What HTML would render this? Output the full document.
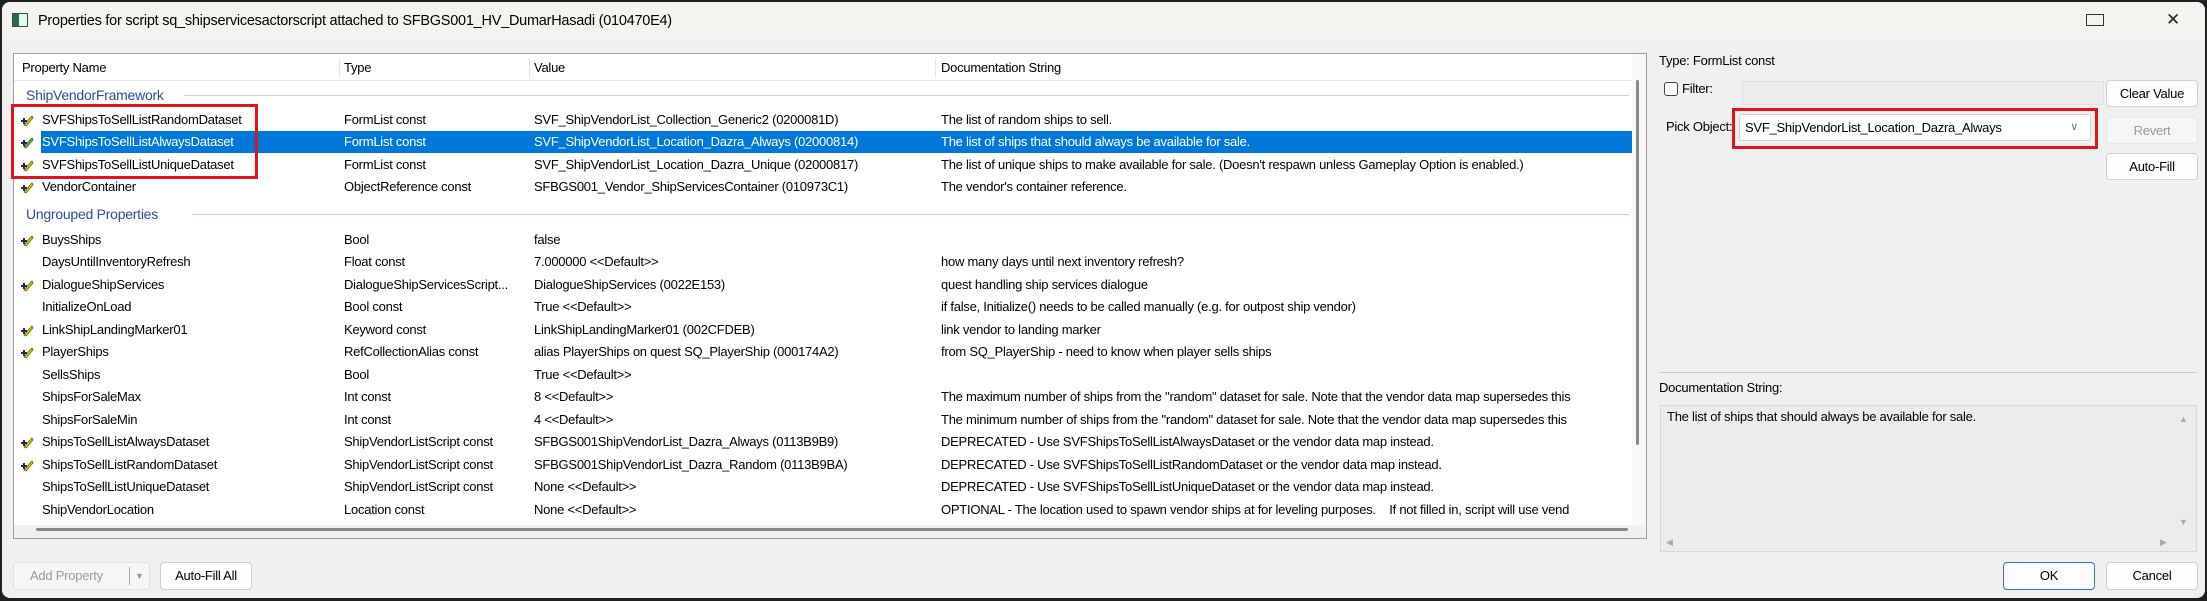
<!DOCTYPE html>
<html><head><meta charset="utf-8"><style>
*{margin:0;padding:0;box-sizing:border-box}
body{width:2207px;height:601px;background:#202020;font-family:"Liberation Sans",sans-serif;font-size:13px;letter-spacing:-0.25px;color:#000;overflow:hidden;position:relative}
.win{position:absolute;left:2px;top:2px;width:2203px;height:596px;background:#f0f0f0;border-radius:8px;overflow:hidden}
.title{position:absolute;left:0;top:0;width:100%;height:38px;background:#f5f3ee}
.a{position:absolute;white-space:nowrap}
.list{position:absolute;left:11px;top:51px;width:1634px;height:486px;background:#fff;border:1px solid #a0a0a0;overflow:hidden}
.row{position:absolute;left:0;width:1620px;height:22px;line-height:22px}
.row span{position:absolute;top:0;white-space:nowrap}
.sel{background:#0078d7;color:#fff}
.grp{color:#2b4aa8;font-size:14px}
.gl{position:absolute;height:1px;background:#c8d0e8}
.btn{position:absolute;background:#fdfdfd;border:1px solid #d0d0d0;border-radius:4px;text-align:center;font-size:13px}
.ico{position:absolute;left:6px;top:4px;width:14px;height:14px}
</style></head><body>
<div class="win">
<div class="title"></div>
<div class="a" style="left:10px;top:11px;width:16px;height:14px;border:1px solid #444;background:#dfe;"><div style="width:6px;height:12px;background:#2a6a4a"></div></div>
<div class="a" style="left:36px;top:11px;font-size:14.5px">Properties for script sq_shipservicesactorscript attached to SFBGS001_HV_DumarHasadi (010470E4)</div>
<div class="a" style="left:2084px;top:12px;width:18px;height:12px;border:1.5px solid #333"></div>
<div class="a" style="left:2164px;top:8px;font-size:17px;color:#222">✕</div>

<div class="list">
 <div class="row" style="top:1px;height:26px;line-height:26px;border-bottom:1px solid #e5e5e5;width:1632px">
  <span style="left:8px">Property Name</span><span style="left:330px">Type</span><span style="left:520px">Value</span><span style="left:927px">Documentation String</span>
 </div>
 <div class="gl" style="left:325px;top:4px;width:1px;height:20px;background:#e5e5e5"></div>
 <div class="gl" style="left:515px;top:4px;width:1px;height:20px;background:#e5e5e5"></div>
 <div class="gl" style="left:921px;top:4px;width:1px;height:20px;background:#e5e5e5"></div>

 <div class="row grp" style="top:30px"><span style="left:12px">ShipVendorFramework</span></div>
 <div class="gl" style="left:170px;top:41px;width:1445px"></div>
 <div class="row" style="top:55px"><svg class="ico" viewBox="0 0 14 14"><path d="M4 12 L12 3 L13 5 L6 13Z" fill="#e8c800" stroke="#6a5a00" stroke-width=".8"/><path d="M1 8h6M4 5v6" stroke="#1a2a6a" stroke-width="2"/></svg><span style="left:28px">SVFShipsToSellListRandomDataset</span><span style="left:330px">FormList const</span><span style="left:520px">SVF_ShipVendorList_Collection_Generic2 (0200081D)</span><span style="left:927px">The list of random ships to sell.</span></div>
 <div class="row" style="top:77px"><svg class="ico" viewBox="0 0 14 14"><path d="M4 12 L12 3 L13 5 L6 13Z" fill="#7ab040" stroke="#3a5a20" stroke-width=".8"/><path d="M1 8h6M4 5v6" stroke="#1a2a6a" stroke-width="2"/></svg><div class="sel" style="position:absolute;left:27px;top:0;width:1593px;height:22px"></div><span style="left:28px;color:#fff">SVFShipsToSellListAlwaysDataset</span><span style="left:330px;color:#fff">FormList const</span><span style="left:520px;color:#fff">SVF_ShipVendorList_Location_Dazra_Always (02000814)</span><span style="left:927px;color:#fff">The list of ships that should always be available for sale.</span></div>
 <div class="row" style="top:100px"><svg class="ico" viewBox="0 0 14 14"><path d="M4 12 L12 3 L13 5 L6 13Z" fill="#e8c800" stroke="#6a5a00" stroke-width=".8"/><path d="M1 8h6M4 5v6" stroke="#1a2a6a" stroke-width="2"/></svg><span style="left:28px">SVFShipsToSellListUniqueDataset</span><span style="left:330px">FormList const</span><span style="left:520px">SVF_ShipVendorList_Location_Dazra_Unique (02000817)</span><span style="left:927px">The list of unique ships to make available for sale. (Doesn't respawn unless Gameplay Option is enabled.)</span></div>
 <div class="row" style="top:122px"><svg class="ico" viewBox="0 0 14 14"><path d="M4 12 L12 3 L13 5 L6 13Z" fill="#e8c800" stroke="#6a5a00" stroke-width=".8"/><path d="M1 8h6M4 5v6" stroke="#1a2a6a" stroke-width="2"/></svg><span style="left:28px">VendorContainer</span><span style="left:330px">ObjectReference const</span><span style="left:520px">SFBGS001_Vendor_ShipServicesContainer (010973C1)</span><span style="left:927px">The vendor's container reference.</span></div>
 <div class="row grp" style="top:149px"><span style="left:12px">Ungrouped Properties</span></div>
 <div class="gl" style="left:178px;top:160px;width:1437px"></div>

 <div class="row" style="top:175px"><svg class="ico" viewBox="0 0 14 14"><path d="M4 12 L12 3 L13 5 L6 13Z" fill="#e8c800" stroke="#6a5a00" stroke-width=".8"/><path d="M1 8h6M4 5v6" stroke="#1a2a6a" stroke-width="2"/></svg><span style="left:28px">BuysShips</span><span style="left:330px">Bool</span><span style="left:520px">false</span></div>
 <div class="row" style="top:197px"><span style="left:28px">DaysUntilInventoryRefresh</span><span style="left:330px">Float const</span><span style="left:520px">7.000000 &lt;&lt;Default&gt;&gt;</span><span style="left:927px">how many days until next inventory refresh?</span></div>
 <div class="row" style="top:220px"><svg class="ico" viewBox="0 0 14 14"><path d="M4 12 L12 3 L13 5 L6 13Z" fill="#e8c800" stroke="#6a5a00" stroke-width=".8"/><path d="M1 8h6M4 5v6" stroke="#1a2a6a" stroke-width="2"/></svg><span style="left:28px">DialogueShipServices</span><span style="left:330px">DialogueShipServicesScript...</span><span style="left:520px">DialogueShipServices (0022E153)</span><span style="left:927px">quest handling ship services dialogue</span></div>
 <div class="row" style="top:242px"><span style="left:28px">InitializeOnLoad</span><span style="left:330px">Bool const</span><span style="left:520px">True &lt;&lt;Default&gt;&gt;</span><span style="left:927px">if false, Initialize() needs to be called manually (e.g. for outpost ship vendor)</span></div>
 <div class="row" style="top:265px"><svg class="ico" viewBox="0 0 14 14"><path d="M4 12 L12 3 L13 5 L6 13Z" fill="#e8c800" stroke="#6a5a00" stroke-width=".8"/><path d="M1 8h6M4 5v6" stroke="#1a2a6a" stroke-width="2"/></svg><span style="left:28px">LinkShipLandingMarker01</span><span style="left:330px">Keyword const</span><span style="left:520px">LinkShipLandingMarker01 (002CFDEB)</span><span style="left:927px">link vendor to landing marker</span></div>
 <div class="row" style="top:287px"><svg class="ico" viewBox="0 0 14 14"><path d="M4 12 L12 3 L13 5 L6 13Z" fill="#e8c800" stroke="#6a5a00" stroke-width=".8"/><path d="M1 8h6M4 5v6" stroke="#1a2a6a" stroke-width="2"/></svg><span style="left:28px">PlayerShips</span><span style="left:330px">RefCollectionAlias const</span><span style="left:520px">alias PlayerShips on quest SQ_PlayerShip (000174A2)</span><span style="left:927px">from SQ_PlayerShip - need to know when player sells ships</span></div>
 <div class="row" style="top:310px"><span style="left:28px">SellsShips</span><span style="left:330px">Bool</span><span style="left:520px">True &lt;&lt;Default&gt;&gt;</span></div>
 <div class="row" style="top:332px"><span style="left:28px">ShipsForSaleMax</span><span style="left:330px">Int const</span><span style="left:520px">8 &lt;&lt;Default&gt;&gt;</span><span style="left:927px">The maximum number of ships from the "random" dataset for sale. Note that the vendor data map supersedes this</span></div>
 <div class="row" style="top:355px"><span style="left:28px">ShipsForSaleMin</span><span style="left:330px">Int const</span><span style="left:520px">4 &lt;&lt;Default&gt;&gt;</span><span style="left:927px">The minimum number of ships from the "random" dataset for sale. Note that the vendor data map supersedes this</span></div>
 <div class="row" style="top:377px"><svg class="ico" viewBox="0 0 14 14"><path d="M4 12 L12 3 L13 5 L6 13Z" fill="#e8c800" stroke="#6a5a00" stroke-width=".8"/><path d="M1 8h6M4 5v6" stroke="#1a2a6a" stroke-width="2"/></svg><span style="left:28px">ShipsToSellListAlwaysDataset</span><span style="left:330px">ShipVendorListScript const</span><span style="left:520px">SFBGS001ShipVendorList_Dazra_Always (0113B9B9)</span><span style="left:927px">DEPRECATED - Use SVFShipsToSellListAlwaysDataset or the vendor data map instead.</span></div>
 <div class="row" style="top:400px"><svg class="ico" viewBox="0 0 14 14"><path d="M4 12 L12 3 L13 5 L6 13Z" fill="#e8c800" stroke="#6a5a00" stroke-width=".8"/><path d="M1 8h6M4 5v6" stroke="#1a2a6a" stroke-width="2"/></svg><span style="left:28px">ShipsToSellListRandomDataset</span><span style="left:330px">ShipVendorListScript const</span><span style="left:520px">SFBGS001ShipVendorList_Dazra_Random (0113B9BA)</span><span style="left:927px">DEPRECATED - Use SVFShipsToSellListRandomDataset or the vendor data map instead.</span></div>
 <div class="row" style="top:422px"><span style="left:28px">ShipsToSellListUniqueDataset</span><span style="left:330px">ShipVendorListScript const</span><span style="left:520px">None &lt;&lt;Default&gt;&gt;</span><span style="left:927px">DEPRECATED - Use SVFShipsToSellListUniqueDataset or the vendor data map instead.</span></div>
 <div class="row" style="top:445px"><span style="left:28px">ShipVendorLocation</span><span style="left:330px">Location const</span><span style="left:520px">None &lt;&lt;Default&gt;&gt;</span><span style="left:927px">OPTIONAL - The location used to spawn vendor ships at for leveling purposes.&nbsp;&nbsp;&nbsp; If not filled in, script will use vend</span></div>
 <div class="row" style="top:467px"><svg class="ico" viewBox="0 0 14 14"><path d="M4 12 L12 3 L13 5 L6 13Z" fill="#e8c800" stroke="#6a5a00" stroke-width=".8"/></svg><span style="left:28px">SpaceshipStoreLink</span><span style="left:330px">Keyword const</span><span style="left:520px">SpaceshipStoreLink (0015F57F)</span><span style="left:927px">link to store</span></div>
 <div style="position:absolute;left:0;top:471px;width:1632px;height:15px;background:#f0f0f0"></div>
 <div style="position:absolute;left:22px;top:474px;width:1592px;height:3px;background:#888;border-radius:2px"></div>
 <div style="position:absolute;left:1618px;top:0;width:14px;height:471px;background:#f8f8f8"></div>
 <div style="position:absolute;left:1622px;top:26px;width:3px;height:365px;background:#888;border-radius:2px"></div>
</div>
<div class="a" style="left:9px;top:102px;width:247px;height:75px;border:3px solid #e0141c"></div>

<div class="btn" style="left:11px;top:560px;width:137px;height:28px;color:#999;background:#f6f6f6;border-color:#e0e0e0;text-align:left;line-height:26px;padding-left:16px">Add Property <span style="position:absolute;left:115px;top:4px;width:1px;height:18px;background:#aaa"></span><span style="position:absolute;left:121px;top:0;font-size:9px;color:#999">▼</span></div>
<div class="btn" style="left:158px;top:560px;width:92px;height:28px;line-height:26px">Auto-Fill All</div>

<div class="a" style="left:1657px;top:51px">Type: FormList const</div>
<div class="a" style="left:1662px;top:80px;width:14px;height:14px;border:1px solid #444;border-radius:3px;background:#fff"></div>
<div class="a" style="left:1680px;top:79px">Filter:</div>
<div class="a" style="left:1740px;top:79px;width:362px;height:24px;background:#ececec;border:1px solid #e0e0e0"></div>
<div class="btn" style="left:2104px;top:78px;width:92px;height:27px;line-height:25px">Clear Value</div>
<div class="a" style="left:1664px;top:117px">Pick Object:</div>
<div class="a" style="left:1730px;top:106px;width:366px;height:41px;border:3px solid #e0141c"></div>
<div class="a" style="left:1737px;top:112px;width:352px;height:27px;background:#fff;border:1px solid #d0d0d0;border-radius:3px;line-height:25px;padding-left:5px">SVF_ShipVendorList_Location_Dazra_Always<span style="position:absolute;right:12px;top:0;color:#777;font-size:11px">∨</span></div>
<div class="btn" style="left:2104px;top:115px;width:92px;height:27px;line-height:25px;color:#999;background:#f6f6f6;border-color:#e8e8e8">Revert</div>
<div class="btn" style="left:2104px;top:151px;width:92px;height:27px;line-height:25px">Auto-Fill</div>

<div class="a" style="left:1657px;top:370px;width:538px;height:1px;background:#ccc"></div>
<div class="a" style="left:1657px;top:378px">Documentation String:</div>
<div class="a" style="left:1658px;top:403px;width:537px;height:147px;border:1px solid #d8d8d8;background:#ececec"></div>
<div class="a" style="left:1665px;top:407px">The list of ships that should always be available for sale.</div>
<div class="a" style="left:2177px;top:412px;font-size:9px;color:#aaa">▲</div>
<div class="a" style="left:2177px;top:515px;font-size:9px;color:#aaa">▼</div>
<div class="a" style="left:1664px;top:535px;font-size:9px;color:#aaa">◀</div>
<div class="a" style="left:2158px;top:535px;font-size:9px;color:#aaa">▶</div>

<div class="btn" style="left:2001px;top:560px;width:92px;height:28px;line-height:26px;border:1.5px solid #2a78c8">OK</div>
<div class="btn" style="left:2104px;top:560px;width:92px;height:28px;line-height:26px">Cancel</div>
</div>
</body></html>
